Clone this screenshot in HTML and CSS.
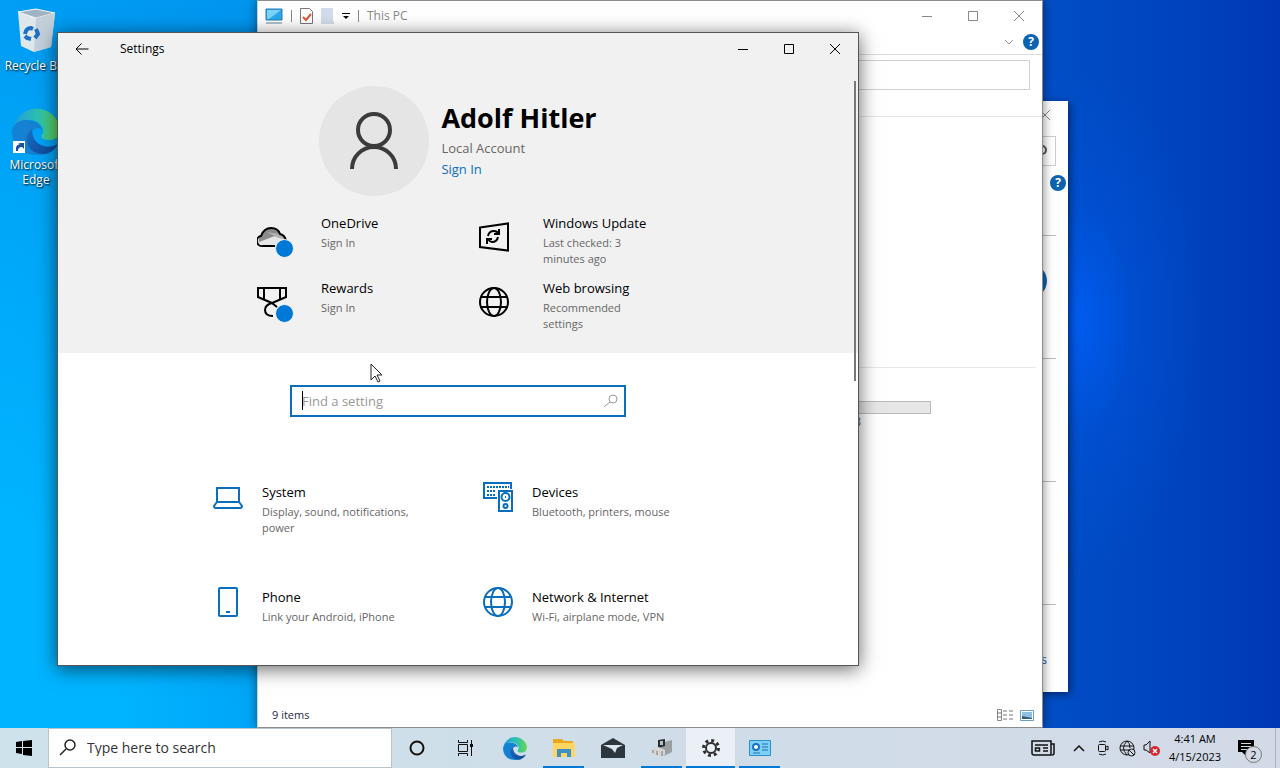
FILE: index.html
```html
<!DOCTYPE html>
<html lang="en">

<head>
<title>Settings</title>
<meta charset="utf-8">
<link rel="stylesheet" href="styles.css">
</head>

<body>
<main class="desktop">

    <div class="shortcuts">
        <a class="shortcut" href="#">
            <svg width="48" height="48" viewBox="0 0 48 48">
                <path d="M6 4l18-3 19 4-4 34-17 5-13-6z" fill="#dfe6ec"/>
                <path d="M6 4l18-3 19 4-19 5z" fill="#9fb3c4" stroke="#f2f6f9"/>
                <path d="M24 10l19-5-4 34-17 5z" fill="#c3cfda"/>
                <path d="M13 26q1-6 6-6l2 1M24 21l2 5-3 4M19 31l-4-1-2-2" fill="none" stroke="#1a72c4" stroke-width="4"/>
            </svg>
            <span>Recycle Bin</span>
        </a>
        <a class="shortcut" href="#">
            <svg width="48" height="48" viewBox="0 0 48 48">
                <use href="#edge"/>
                <path d="M1 34h12v12H1z" fill="#fff"/>
                <path d="M4 44v-3q0-3 4-4l-2-1h6v6l-2-2q-4 0-4 4z" fill="#1d4fa0"/>
            </svg>
            <span>Microsoft Edge</span>
        </a>
    </div>

    <!-- Control panel window, at the back -->
    <section class="window panel">
        <div class="panel-close">
            <button class="caption" aria-label="Close"><svg width="10" height="10"><path d="M0 0l10 10M10 0L0 10"/></svg></button>
        </div>
        <button class="panel-search" aria-label="Search">
            <svg width="14" height="14" viewBox="0 0 14 14"><circle cx="8" cy="6" r="4"/><path d="M5 9l-4 4"/></svg>
        </button>
        <div class="panel-help"><button class="help" aria-label="Help">?</button></div>
        <div class="panel-row row-short"></div>
        <div class="panel-row"><span class="disc"></span></div>
        <div class="panel-row"></div>
        <div class="panel-row"></div>
        <a class="panel-link" href="#">Related settings</a>
    </section>

    <!-- File explorer -->
    <section class="window explorer">
        <header class="explorer-bar">
            <svg width="18" height="16" viewBox="0 0 18 16"><path d="M1 1h16v11H1z" fill="#28a8ea" stroke="#2b7cb3"/><path d="M2 2h14L4 11H2z" fill="#7ed3f8"/><path d="M1 15h16" stroke="#5d8299"/></svg>
            <span class="divider"></span>
            <svg width="13" height="16" viewBox="0 0 13 16"><path d="M.5.5h9l3 3v12H.5z" fill="#fff" stroke="#777"/><path d="M3 9l3 3 5-6" fill="none" stroke="#e0553a" stroke-width="2"/></svg>
            <svg width="13" height="16" viewBox="0 0 13 16"><path d="M0 0h12v13h1v3H0z" fill="#d3dcec"/></svg>
            <svg width="8" height="8" viewBox="0 0 8 8"><path d="M0 1.500h8" stroke="#000"/><path d="M1 4h6L4 7z"/></svg>
            <span class="divider"></span>
            <span class="explorer-title">This PC</span>
            <button class="caption" aria-label="Minimize"><svg width="10" height="10"><path d="M0 5.5h10"/></svg></button>
            <button class="caption" aria-label="Maximize"><svg width="10" height="10"><path d="M.5.5h9v9h-9z"/></svg></button>
            <button class="caption" aria-label="Close"><svg width="10" height="10"><path d="M0 0l10 10M10 0L0 10"/></svg></button>
        </header>
        <div class="ribbon">
            <svg width="8" height="6" viewBox="0 0 8 6"><path d="M0 1l4 4 4-4" fill="none" stroke="#999"/></svg>
            <button class="help" aria-label="Help">?</button>
        </div>
        <div class="address"><input type="text" aria-label="Search This PC"></div>
        <div class="folders"></div>
        <div class="drives">
            <div class="drive-bar"></div>
            <div class="drive-label">GB</div>
        </div>
        <footer class="status">
            <span>9 items</span>
            <svg width="17" height="12" viewBox="0 0 17 12"><path d="M.5.5h4v11h-4z" fill="none" stroke="#888"/><path d="M0 4h5M0 8h5M6 2h4M12 2h4M6 6h4M12 6h4M6 10h4M12 10h4" stroke="#777"/></svg>
            <svg width="14" height="11" viewBox="0 0 14 11"><path d="M.5.5h13v10H.5z" fill="#fff" stroke="#6aa0c8"/><path d="M2 2h10v7H2z" fill="#8fc0e2"/><path d="M2 6l10 2v1H2z" fill="#2f5d7c"/></svg>
        </footer>
    </section>

    <!-- Settings -->
    <section class="window settings">
        <div class="settings-top">
            <header class="titlebar">
                <button class="back" aria-label="Back"><svg width="14" height="12" viewBox="0 0 14 12"><path d="M6.500.5L1 6l5.500 5.500M1 6h12.500"/></svg></button>
                <span class="title">Settings</span>
                <button class="caption" aria-label="Minimize"><svg width="10" height="10"><path d="M0 5.5h10"/></svg></button>
                <button class="caption" aria-label="Maximize"><svg width="10" height="10"><path d="M.5.5h9v9h-9z"/></svg></button>
                <button class="caption" aria-label="Close"><svg width="10" height="10"><path d="M0 0l10 10M10 0L0 10"/></svg></button>
            </header>

            <div class="account">
                <div class="avatar">
                    <svg width="50" height="58" viewBox="0 0 50 58" fill="none" stroke="#3b3b3b" stroke-width="4"><circle cx="25" cy="18" r="16"/><path d="M3 57a22 22 0 0 1 44 0"/></svg>
                </div>
                <div class="who">
                    <h1>Adolf Hitler</h1>
                    <p>Local Account</p>
                    <a href="#">Sign In</a>
                </div>
            </div>

            <div class="tiles">
                <a class="tile" href="#">
                    <span class="tile-icon">
                        <svg width="30" height="30" viewBox="0 0 30 30">
                            <path d="M6 24A5 5 0 0 1 4 14Q7 6 14 6q7 0 9 6 5 1 6 7v5z" fill="#e6e6e6"/>
                            <path d="M2 20Q1 15 5 13q3-7 9-7 7 0 9 6L2 20z" fill="#8b8b8b"/>
                            <path d="M10 10l13 2q5 1 6 6l-10-3z" fill="#b0b0b0"/>
                            <path d="M18 24H6A5 5 0 0 1 4 14Q7 6 14 6q7 0 9 6 5 1 6 7" fill="none" stroke="#000" stroke-width="2"/>
                        </svg>
                        <i class="dot"></i>
                    </span>
                    <span class="text"><b>OneDrive</b><small>Sign In</small></span>
                </a>
                <a class="tile" href="#">
                    <span class="tile-icon">
                        <svg width="30" height="30" viewBox="0 0 30 30" fill="none" stroke="#000" stroke-width="2"><path d="M1 5.500l28-4v27l-28-3.500z"/><path d="M9 14q1-5 6-5 3 0 5 3M20 7v5h-5M19 15q-1 5-6 5-2 0-4-3M8 22v-5h5"/></svg>
                    </span>
                    <span class="text"><b>Windows Update</b><small>Last checked: 3 minutes ago</small></span>
                </a>
                <a class="tile" href="#">
                    <span class="tile-icon">
                        <svg width="30" height="30" viewBox="0 0 30 30" fill="none" stroke="#000" stroke-width="2"><path d="M15 16L1 10V1h28v9l-14 6 5 4M7 1v11M23 1v11"/><path d="M16 29q-8 0-8-6 0-5 7-7"/></svg>
                        <i class="dot"></i>
                    </span>
                    <span class="text"><b>Rewards</b><small>Sign In</small></span>
                </a>
                <a class="tile" href="#">
                    <span class="tile-icon">
                        <svg width="30" height="30" viewBox="0 0 30 30" fill="none" stroke="#000" stroke-width="2"><circle cx="15" cy="15" r="14"/><ellipse cx="15" cy="15" rx="7" ry="14"/><path d="M2 10h26M2 20h26"/></svg>
                    </span>
                    <span class="text"><b>Web browsing</b><small>Recommended settings</small></span>
                </a>
            </div>
        </div>

        <form class="find">
            <input type="text" placeholder="Find a setting" aria-label="Find a setting">
            <i class="caret"></i>
            <svg width="14" height="14" viewBox="0 0 14 14" fill="none" stroke="#999"><circle cx="9" cy="5" r="4"/><path d="M6 8l-6 5"/></svg>
        </form>

        <nav class="categories">
            <a class="category" href="#">
                <svg width="30" height="30" viewBox="0 0 30 30" fill="none" stroke="#0a6ebd" stroke-width="2"><path d="M4 20V6h22v14M4 20h22l3 4q0 2-2 2H3q-2 0-2-2z"/></svg>
                <span class="text"><b>System</b><small>Display, sound, notifications, power</small></span>
            </a>
            <a class="category" href="#">
                <svg width="30" height="30" viewBox="0 0 30 30" fill="none" stroke="#0a6ebd" stroke-width="2"><path d="M14 16H1V1h27v6"/><path d="M4 5h22M4 9h9M4 13h9" stroke-dasharray="2 1"/><path d="M16 9h13v20H16z"/><circle cx="22.500" cy="15" r="4"/><circle cx="22.500" cy="24" r="2"/><path d="M22 15h1"/></svg>
                <span class="text"><b>Devices</b><small>Bluetooth, printers, mouse</small></span>
            </a>
            <a class="category" href="#">
                <svg width="30" height="30" viewBox="0 0 30 30" fill="none" stroke="#0a6ebd" stroke-width="2"><rect x="6" y="1" width="18" height="28" rx="1"/><path d="M13 25h4"/></svg>
                <span class="text"><b>Phone</b><small>Link your Android, iPhone</small></span>
            </a>
            <a class="category" href="#">
                <svg width="30" height="30" viewBox="0 0 30 30" fill="none" stroke="#0a6ebd" stroke-width="2"><circle cx="15" cy="15" r="14"/><ellipse cx="15" cy="15" rx="7" ry="14"/><path d="M2 10h26M2 20h26"/></svg>
                <span class="text"><b>Network &amp; Internet</b><small>Wi-Fi, airplane mode, VPN</small></span>
            </a>
        </nav>
        <i class="scrollbar"></i>
    </section>

    <svg class="pointer" width="13" height="20" viewBox="0 0 13 20"><path d="M1 1v16l4-4 3 6 2-1-3-6h5z" fill="#fff" stroke="#222"/></svg>
</main>

<footer class="taskbar">
    <button class="start" aria-label="Start">
        <svg width="16" height="16" viewBox="0 0 16 16"><path d="M0 2l6-1v6H0zM7 1l9-1v7H7zM0 8h6v6l-6-1zM7 8h9v8l-9-1z"/></svg>
    </button>
    <label class="search">
        <svg width="18" height="18" viewBox="0 0 18 18" fill="none" stroke="#222" stroke-width="1.500"><circle cx="11" cy="6" r="5"/><path d="M7 10l-6 6"/></svg>
        <input type="text" placeholder="Type here to search">
    </label>
    <button class="task" aria-label="Cortana"><svg width="16" height="16" viewBox="0 0 16 16"><circle cx="8" cy="8" r="6.500" fill="none" stroke="#111" stroke-width="2"/></svg></button>
    <button class="task" aria-label="Task view"><svg width="17" height="16" viewBox="0 0 17 16" fill="none" stroke="#111"><path d="M1.500 0v2.500h9V0M1.500 16v-2.500h9V16M1.500 4.500h9v7h-9zM14.500 0v16" /><path d="M13 5.500h3" stroke-width="3"/></svg></button>
    <button class="task" aria-label="Edge">
        <svg width="24" height="24" viewBox="0 0 48 48">
            <defs>
                <linearGradient id="wave" x1="0" x2="1"><stop offset="0" stop-color="#1d9de0"/><stop offset=".6" stop-color="#2fc4a8"/><stop offset="1" stop-color="#6bd84a"/></linearGradient>
                <linearGradient id="deep" x1="0" x2="1" y2="1"><stop offset="0" stop-color="#1b6fc4"/><stop offset="1" stop-color="#0d4596"/></linearGradient>
            </defs>
            <g id="edge">
                <path d="M1 21A24 24 0 0 1 48 21q0 12-11 12-8 0-8-4 4-4 1-9Q25 11 12 13 4 15 1 21z" fill="url(#wave)"/>
                <path d="M0 25q1-11 13-12 15 0 17 10-3-4-9 0-6 5-1 14 6 10 18 9Q33 48 24 48 1 47 0 25z" fill="#1581d2"/>
                <path d="M20 22q-9 7-4 17 6 9 17 8 9-2 13-10-9 5-17 1-9-4-9-16z" fill="url(#deep)"/>
            </g>
        </svg>
    </button>
    <button class="task open" aria-label="File Explorer"><svg width="22" height="20" viewBox="0 0 22 20"><path d="M0 1h9l2 2h9v16H0z" fill="#e8a91c"/><path d="M0 5h22v14H0z" fill="#ffd562"/><path d="M4 19v-8h14v8h-4v-4H8v4z" fill="#3c8fc7"/></svg></button>
    <button class="task" aria-label="Mail"><svg width="24" height="20" viewBox="0 0 24 20"><path d="M0 7l12-7 12 7v13H0z" fill="#2c363f"/><path d="M2 7h20l-6 3-2 5-3-4z" fill="#dde6ee"/></svg></button>
    <button class="task open" aria-label="Devices"><svg width="22" height="18" viewBox="0 0 22 18"><path d="M10 4l11-3v12l-8 4-6-5z" fill="#9a9fa3"/><path d="M7 1l7-1v7l-7 2z" fill="#282d31"/><path d="M9 2h3v4H9z" fill="#b8c1c5"/><path d="M0 10l5-3 9 4v5l-4 2-10-4z" fill="#d5d7d6"/><path d="M2 11v3M6 12v4M11 12v5" stroke="#777"/></svg></button>
    <button class="task open active" aria-label="Settings"><svg width="18" height="18" viewBox="0 0 18 18" fill="none" stroke="#2e2e2e"><circle cx="9" cy="9" r="5" stroke-width="2"/><circle cx="9" cy="9" r="7.500" stroke-width="3" stroke-dasharray="2.900 2.990"/></svg></button>
    <button class="task open" aria-label="Control Panel"><svg width="22" height="16" viewBox="0 0 22 16"><path d="M.5.5h21v15H.5z" fill="#7fd0f5" stroke="#2a8fc9"/><circle cx="7" cy="7" r="3" fill="#fff" stroke="#1a72c4" stroke-width="2"/><path d="M13 4h6M13 7h6M13 10h6M4 13h7" stroke="#1474bd"/></svg></button>

    <div class="tray">
        <button class="news" aria-label="News"><svg width="24" height="16" viewBox="0 0 24 16" fill="none" stroke="#111" stroke-width="1.500"><path d="M1 1h19v14H3q-2 0-2-2zM20 4h3v9q0 2-2 2M4 5h13M12 8h5M12 11h5M4.500 8h4v3h-4z"/></svg></button>
        <button aria-label="Show hidden icons"><svg width="12" height="8" viewBox="0 0 12 8" fill="none" stroke="#111" stroke-width="1.500"><path d="M1 7l5-5 5 5"/></svg></button>
        <button aria-label="Meet Now"><svg width="12" height="16" viewBox="0 0 12 16" fill="none" stroke="#111"><rect x="1.500" y="4.500" width="7" height="7" rx="1"/><path d="M9 7l2-1v4l-2-1M2 2q4-2 7 0M2 14q4 2 7 0"/></svg></button>
        <button aria-label="Network"><svg width="17" height="17" viewBox="0 0 17 17" fill="none" stroke="#111"><circle cx="8" cy="8" r="7"/><path d="M1 6h14M1 10h9M8 1q-7 7 0 14M8 1q3 2 3 7"/><circle cx="12.500" cy="12.500" r="3.500" fill="#d3dae7"/><path d="M10 10l5 5"/></svg></button>
        <button aria-label="Volume"><svg width="17" height="15" viewBox="0 0 17 15"><path d="M1 4h2l4-4v12L3 9H1z" fill="none" stroke="#111"/><circle cx="12" cy="10" r="5" fill="#d9262e"/><path d="M10 8l4 4M14 8l-4 4" stroke="#fff" stroke-width="1.500"/></svg></button>
        <div class="clock"><time>4:41 AM</time><time>4/15/2023</time></div>
        <button class="notify" aria-label="Notifications"><svg width="16" height="16" viewBox="0 0 16 16"><path d="M0 0h16v12H8v4l-4-4H0z" fill="#000"/><path d="M3 3.500h10M3 6.500h10M3 9.500h7" stroke="#d3dae7"/></svg><span class="badge">2</span></button>
    </div>
</footer>
</body>

</html>
```
FILE: styles.css
```css
* {
    box-sizing: border-box;
}

body {
    margin: 0;
    height: 100vh;
    display: flex;
    flex-direction: column;
    overflow: hidden;
    font-family: "Open Sans", "Noto Sans", sans-serif;
    font-size: 12px;
    line-height: 16px;
    color: #000;
}

h1, p {
    margin: 0;
}

a {
    color: inherit;
    text-decoration: none;
}

button {
    border: 0;
    padding: 0;
    background: none;
    font: inherit;
    display: flex;
    align-items: center;
    justify-content: center;
}

input {
    font: inherit;
    border: 0;
    outline: 0;
}

svg {
    display: block;
    flex: none;
}

/* desktop */
.desktop {
    flex: 1;
    min-height: 0;
    position: relative;
    overflow: hidden;
    background:
        radial-gradient(ellipse 130px 260px at 84% 44%, #005cf0, rgba(0, 86, 226, 0.400) 45%, rgba(0, 75, 205, 0)),
        radial-gradient(ellipse 400px 700px at 0 100%, #00b4ff 30%, rgba(0, 180, 255, 0)),
        linear-gradient(90deg, #009ef4 0%, #0095ee 20%, #004cc4 84%, #0043be 92%, #0038b4 100%);
}

.shortcuts {
    width: 72px;
    padding-top: 8px;
    display: grid;
    gap: 34px;
}

.shortcut {
    display: flex;
    flex-direction: column;
    align-items: center;
    gap: 2px;
    line-height: 15px;
    text-align: center;
    color: #fff;
    text-shadow: 1px 1px 2px #000;
}

.window {
    position: absolute;
    display: flex;
    flex-direction: column;
    background: #fff;
}

.window > * {
    flex-shrink: 0;
}

.caption {
    width: 46px;
    height: 32px;
}

.caption svg {
    fill: none;
    stroke: #000;
}

.panel .caption svg,
.explorer .caption svg {
    stroke: #888;
}

.help {
    width: 16px;
    height: 16px;
    border-radius: 50%;
    background: #0a64b0;
    color: #fff;
    font-weight: bold;
}

/* control panel */
.panel {
    top: 101px;
    left: 560px;
    right: 212px;
    bottom: 36px;
    padding-right: 12px;
    box-shadow: 2px 2px 8px rgba(0, 0, 0, 0.500);
}

.panel-close {
    display: flex;
    justify-content: flex-end;
    height: 35px;
    margin-right: -12px;
}

.panel-close .caption {
    height: 28px;
}

.panel-search {
    height: 30px;
    padding-right: 7px;
    justify-content: flex-end;
    border: 1px solid #ccc;
}

.panel-search svg {
    fill: none;
    stroke: #555;
    stroke-width: 2;
}

.panel-help {
    display: flex;
    justify-content: flex-end;
    height: 26px;
    padding-top: 9px;
    margin-right: -10px;
}

.panel-row {
    height: 123px;
    display: flex;
    align-items: center;
    justify-content: flex-end;
    border-bottom: 1px solid #bbb;
}

.row-short {
    height: 44px;
}

.disc {
    width: 34px;
    height: 34px;
    margin: 0 9px 32px 0;
    border-radius: 50%;
    background: #0a64b0;
}

.panel-link {
    padding: 47px 9px 0 0;
    text-align: right;
    color: #0a64b0;
}

/* explorer */
.explorer {
    top: 0;
    left: 257px;
    right: 237px;
    bottom: 0;
    border: 1px solid #8c8c8c;
    border-left-color: #c9d4dc;
    box-shadow: 0 0 10px rgba(0, 0, 0, 0.500);
}

.explorer-bar {
    height: 29px;
    padding-left: 7px;
    display: flex;
    align-items: center;
    gap: 8px;
    color: #888;
}

.explorer-bar .divider {
    width: 1px;
    height: 12px;
    background: #888;
}

.explorer-bar .caption {
    margin-left: -8px;
}

.explorer-title {
    flex: 1;
}

.ribbon {
    height: 25px;
    padding-right: 3px;
    display: flex;
    align-items: center;
    justify-content: flex-end;
    gap: 10px;
    border-bottom: 1px solid #ddd;
}

.address {
    padding: 5px 12px 26px;
    border-bottom: 1px solid #e5e5e5;
}

.address input {
    display: block;
    width: 100%;
    height: 30px;
    border: 1px solid #d0d0d0;
}

.folders {
    height: 251px;
    margin-right: 6px;
    border-bottom: 1px solid #e8e8e8;
}

.drives {
    flex: 1;
    padding: 33px 111px 0 440px;
}

.drive-bar {
    height: 13px;
    border: 1px solid #bbb;
    background: #e6e6e6;
}

.drive-label {
    width: 163px;
    text-align: right;
    color: #666;
}

.status {
    height: 24px;
    padding: 0 8px 0 14px;
    display: flex;
    align-items: center;
    gap: 6px;
    font-size: 11px;
    color: #1e2a4a;
}

.status span {
    flex: 1;
}

/* settings */
.settings {
    top: 32px;
    left: 57px;
    right: 421px;
    bottom: 62px;
    overflow: hidden;
    border: 1px solid #555;
    box-shadow: 0 3px 18px rgba(0, 0, 0, 0.600);
}

.settings-top {
    padding-bottom: 21px;
    background: #f1f1f1;
}

.titlebar {
    display: flex;
    align-items: center;
}

.back {
    width: 48px;
    height: 32px;
}

.back svg {
    fill: none;
    stroke: #000;
}

.title {
    flex: 1;
    padding-left: 14px;
}

.account {
    margin: 21px 0 17px;
    display: flex;
    align-items: center;
    justify-content: center;
    gap: 12px;
}

.avatar {
    width: 110px;
    height: 110px;
    border-radius: 50%;
    background: #e5e5e5;
    display: flex;
    align-items: center;
    justify-content: center;
}

.who {
    font-size: 13px;
    line-height: 21px;
    color: #666;
}

.who h1 {
    margin-bottom: 4px;
    font-size: 27px;
    line-height: 32px;
    color: #000;
}

.who a {
    color: #0a6ebd;
}

.text {
    flex: 1;
}

.text b {
    display: block;
    margin-bottom: 2px;
    font-size: 13px;
    line-height: 20px;
    font-weight: normal;
    white-space: nowrap;
}

.text small {
    display: block;
    font-size: 11px;
    line-height: 16px;
    color: #666;
}

.tiles {
    display: grid;
    grid-template-columns: 222px 222px;
    justify-content: center;
    row-gap: 11px;
}

.tile {
    padding: 0 21px;
    display: flex;
    gap: 34px;
}

.tile .text {
    padding-right: 16px;
}

.tile-icon {
    position: relative;
    width: 30px;
    padding-top: 9px;
}

.dot {
    position: absolute;
    left: 18px;
    top: 26px;
    width: 19px;
    height: 19px;
    border: 1px solid #f1f1f1;
    border-radius: 50%;
    background: #0078d7;
}

.find {
    position: relative;
    width: 336px;
    margin: 32px auto 65px;
    display: flex;
    align-items: center;
    padding-right: 6px;
    border: 2px solid #0a6ebd;
}

.find input {
    flex: 1;
    height: 28px;
    padding: 0 10px;
    font-size: 13px;
}

.find input::placeholder {
    color: #999;
}

.caret {
    position: absolute;
    left: 10px;
    top: 4px;
    width: 1px;
    height: 19px;
    background: #000;
}

.categories {
    display: grid;
    grid-template-columns: 270px 270px;
    justify-content: center;
    row-gap: 51px;
}

.category {
    padding: 0 25px;
    display: flex;
    gap: 19px;
}

.category .text {
    padding-right: 16px;
}

.scrollbar {
    position: absolute;
    right: 2px;
    top: 48px;
    width: 2px;
    height: 300px;
    background: #777;
}

.pointer {
    position: absolute;
    left: 370px;
    top: 363px;
}

/* taskbar */
.taskbar {
    height: 40px;
    display: flex;
    background: linear-gradient(90deg, #cde2eb, #cfdde8 50%, #d3dae7);
}

.start {
    width: 48px;
}

.search {
    width: 344px;
    padding-left: 10px;
    display: flex;
    align-items: center;
    gap: 10px;
    border: 1px solid #b9c4ca;
    background: #fff;
}

.search input {
    flex: 1;
    padding: 0;
    font-size: 14px;
}

.search input::placeholder {
    color: #333;
}

.task {
    width: 49px;
    border: solid transparent;
    border-width: 0 4px;
}

.open {
    background: linear-gradient(#0078d7, #0078d7) bottom / 100% 2px no-repeat content-box;
}

.active {
    border-width: 0;
    background-color: #eaf0f5;
    background-clip: border-box;
}

.tray {
    flex: 1;
    padding-right: 4px;
    display: flex;
    justify-content: flex-end;
}

.tray button {
    width: 24px;
}

.tray .news {
    width: 48px;
}

.clock {
    width: 64px;
    display: flex;
    flex-direction: column;
    align-items: center;
    justify-content: center;
    font-size: 11px;
    line-height: 18px;
}

.tray .notify {
    position: relative;
    width: 49px;
    padding-right: 10px;
    border-right: 1px solid #aab3bf;
}

.badge {
    position: absolute;
    left: 18px;
    top: 18px;
    width: 17px;
    height: 17px;
    border: 1px solid #777;
    border-radius: 50%;
    background: #d3dae7;
    font-size: 11px;
    line-height: 15px;
}
```
